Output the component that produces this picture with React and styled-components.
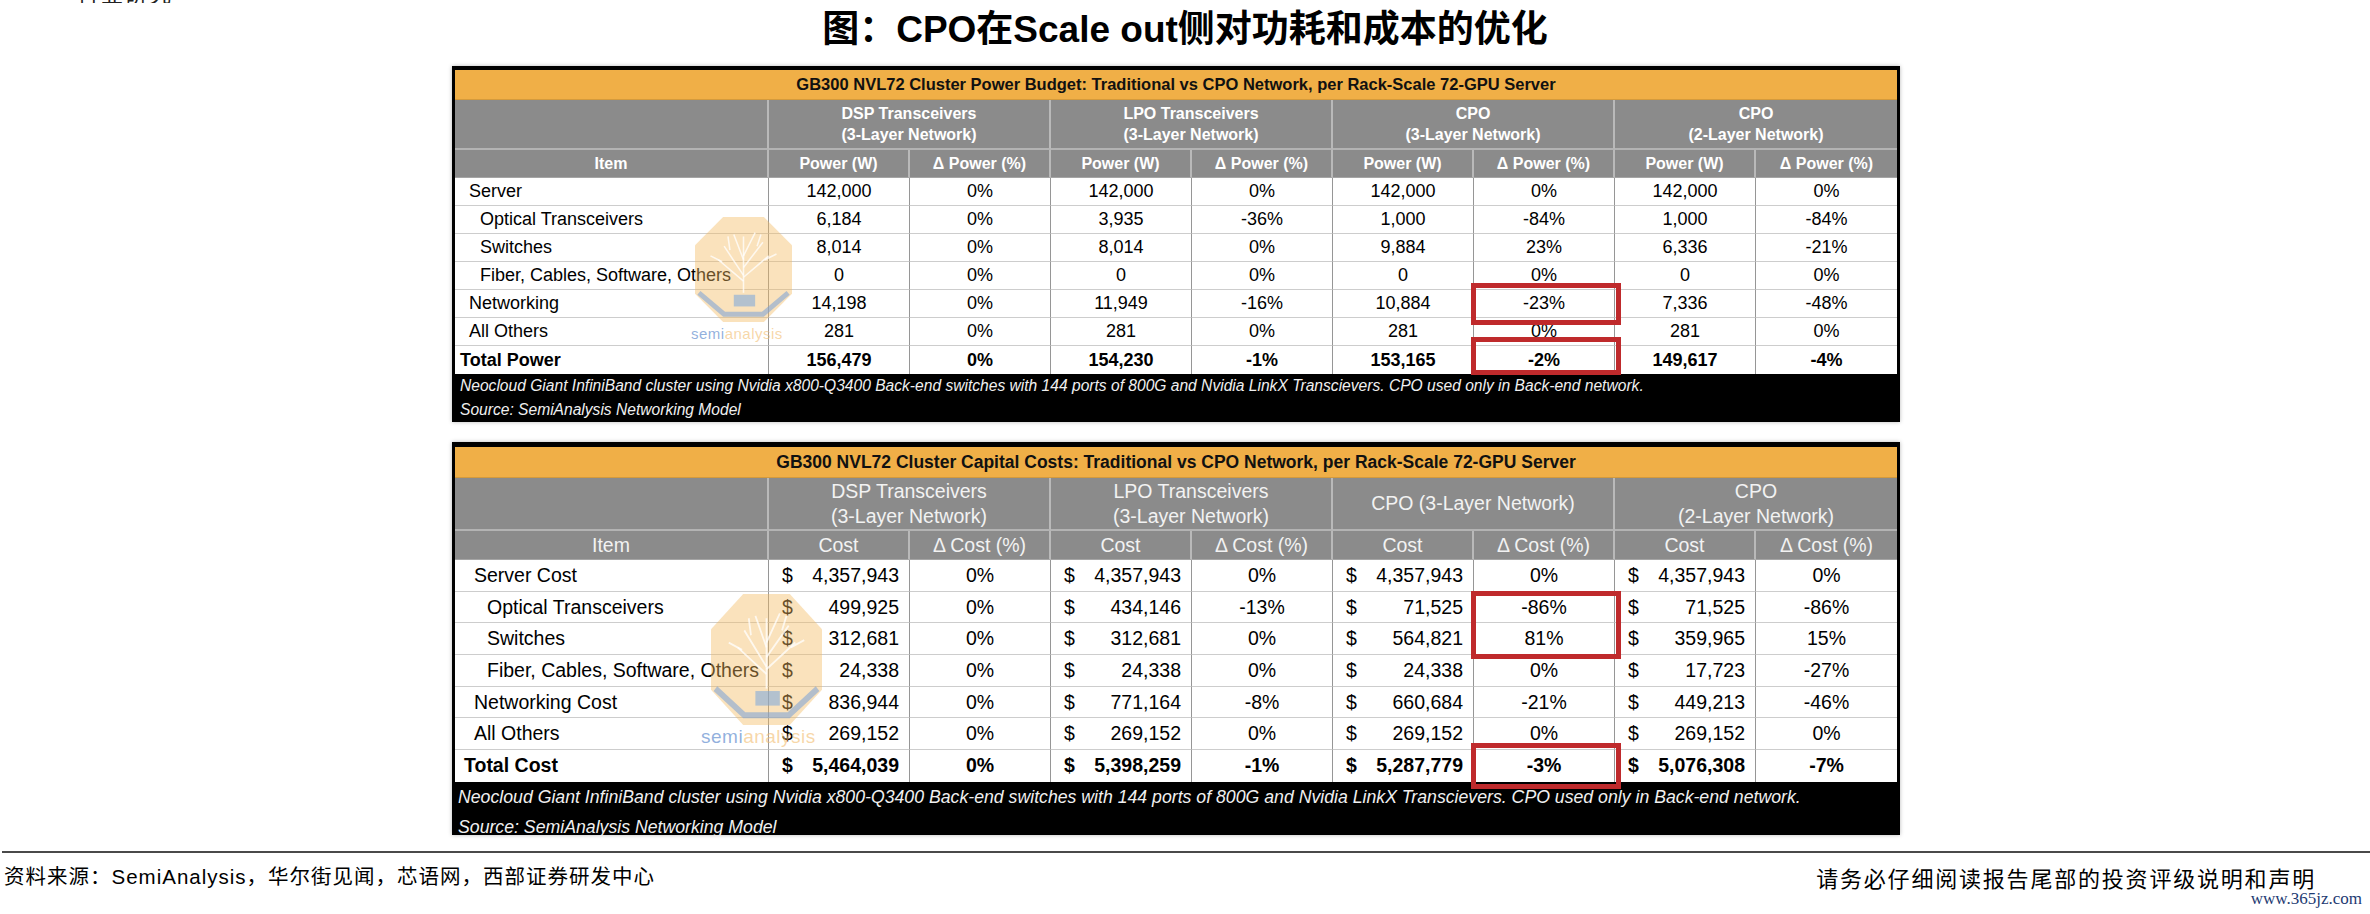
import React from 'react';
import styled, { createGlobalStyle } from 'styled-components';

const GlobalStyle = createGlobalStyle`
  html, body {
    margin: 0;
    padding: 0;
    background: #fff;
  }
  body {
    width: 2370px;
    height: 914px;
    overflow: hidden;
    font-family: "Liberation Sans", "Noto Sans CJK SC", Arial, sans-serif;
    color: #111;
  }
  * { box-sizing: border-box; }
`;

const power = {
  title: 'GB300 NVL72 Cluster Power Budget: Traditional vs CPO Network, per Rack-Scale 72-GPU Server',
  groups: [
    ['DSP Transceivers', '(3-Layer Network)'],
    ['LPO Transceivers', '(3-Layer Network)'],
    ['CPO', '(3-Layer Network)'],
    ['CPO', '(2-Layer Network)'],
  ],
  sub: ['Power (W)', 'Δ Power (%)'],
  rows: [
    { label: 'Server', level: 0, values: ['142,000', '0%', '142,000', '0%', '142,000', '0%', '142,000', '0%'] },
    { label: 'Optical Transceivers', level: 1, values: ['6,184', '0%', '3,935', '-36%', '1,000', '-84%', '1,000', '-84%'] },
    { label: 'Switches', level: 1, values: ['8,014', '0%', '8,014', '0%', '9,884', '23%', '6,336', '-21%'] },
    { label: 'Fiber, Cables, Software, Others', level: 1, values: ['0', '0%', '0', '0%', '0', '0%', '0', '0%'] },
    { label: 'Networking', level: 0, values: ['14,198', '0%', '11,949', '-16%', '10,884', '-23%', '7,336', '-48%'] },
    { label: 'All Others', level: 0, values: ['281', '0%', '281', '0%', '281', '0%', '281', '0%'] },
    { label: 'Total Power', level: 2, values: ['156,479', '0%', '154,230', '-1%', '153,165', '-2%', '149,617', '-4%'] },
  ],
  marks: [{ top: 213, h: 42 }, { top: 267, h: 38 }],
  logo: { left: 240, top: 147, w: 97, h: 105, textTop: 255, textLeft: 236, size: 15 },
};

const cost = {
  title: 'GB300 NVL72 Cluster Capital Costs: Traditional vs CPO Network, per Rack-Scale 72-GPU Server',
  groups: [
    ['DSP Transceivers', '(3-Layer Network)'],
    ['LPO Transceivers', '(3-Layer Network)'],
    ['CPO (3-Layer Network)'],
    ['CPO', '(2-Layer Network)'],
  ],
  sub: ['Cost', 'Δ Cost (%)'],
  rows: [
    { label: 'Server Cost', level: 0, values: ['4,357,943', '0%', '4,357,943', '0%', '4,357,943', '0%', '4,357,943', '0%'] },
    { label: 'Optical Transceivers', level: 1, values: ['499,925', '0%', '434,146', '-13%', '71,525', '-86%', '71,525', '-86%'] },
    { label: 'Switches', level: 1, values: ['312,681', '0%', '312,681', '0%', '564,821', '81%', '359,965', '15%'] },
    { label: 'Fiber, Cables, Software, Others', level: 1, values: ['24,338', '0%', '24,338', '0%', '24,338', '0%', '17,723', '-27%'] },
    { label: 'Networking Cost', level: 0, values: ['836,944', '0%', '771,164', '-8%', '660,684', '-21%', '449,213', '-46%'] },
    { label: 'All Others', level: 0, values: ['269,152', '0%', '269,152', '0%', '269,152', '0%', '269,152', '0%'] },
    { label: 'Total Cost', level: 2, values: ['5,464,039', '0%', '5,398,259', '-1%', '5,287,779', '-3%', '5,076,308', '-7%'] },
  ],
  marks: [{ top: 144, h: 68 }, { top: 296, h: 46 }],
  logo: { left: 256, top: 147, w: 111, h: 131, textTop: 279, textLeft: 246, size: 19 },
};

const note = [
  'Neocloud Giant InfiniBand cluster using Nvidia x800-Q3400 Back-end switches with 144 ports of 800G and Nvidia LinkX Transcievers. CPO used only in Back-end network.',
  'Source: SemiAnalysis Networking Model',
];

const Page = styled.div`
  width: 2370px;
  height: 914px;
  display: flex;
  flex-direction: column;
  overflow: hidden;
`;

const TopCut = styled.div`
  height: 3px;
  overflow: hidden;
  padding-left: 77px;
  span {
    display: block;
    margin-top: -19px;
    font: 22px/22px "Noto Sans CJK SC", sans-serif;
    letter-spacing: 2px;
    color: #222;
  }
`;

const Heading = styled.h1`
  margin: 0;
  height: 63px;
  padding-top: 5px;
  text-align: center;
  font: bold 37px/44px "Liberation Sans", "Noto Sans CJK SC", sans-serif;
  color: #000;
`;

const Tables = styled.div`
  display: flex;
  flex-direction: column;
  gap: 20px;
  padding-left: 452px;
`;

const Frame = styled.div`
  position: relative;
  width: 1448px;
  border-left: 3px solid #000;
  border-right: 3px solid #000;
  border-top: ${p => (p.$big ? 5 : 4)}px solid #000;
  box-shadow: 0 0 4px rgba(0, 0, 0, 0.28);
  font-family: "Liberation Sans", Arial, sans-serif;
`;

const Grid = styled.div`
  display: grid;
  grid-template-columns: 314px repeat(8, 141px);
  grid-template-rows: ${p =>
    p.$big ? '31px 53px 29px repeat(7, 31.7px)' : '30px 50px 28px repeat(7, 28px)'};
  font-size: ${p => (p.$big ? 19.5 : 18)}px;
`;

const Banner = styled.div`
  grid-column: 1 / -1;
  background: #f0af47;
  color: #111;
  display: flex;
  align-items: center;
  justify-content: center;
  font-weight: bold;
  font-size: ${p => (p.$big ? 17.5 : 16.5)}px;
  border-bottom: 1px solid #d49a3c;
`;

const HeadCell = styled.div`
  grid-column: span ${p => p.$span || 1};
  background: #8b8b8b;
  color: ${p => (p.$big ? '#f2f2f2' : '#fff')};
  font-weight: ${p => (p.$big ? 'normal' : 'bold')};
  font-size: ${p => (p.$big ? 19.5 : 16)}px;
  line-height: ${p => (p.$big ? 25 : 21)}px;
  display: flex;
  flex-direction: column;
  align-items: center;
  justify-content: center;
  text-align: center;
  border-right: ${p => (p.$last ? 'none' : '2px solid #b9b9b9')};
  border-bottom: ${p => (p.$top ? '2px solid #b3b3b3' : '1px solid #a5a5a5')};
`;

const Cell = styled.div`
  background: #fff;
  color: #000;
  display: flex;
  align-items: center;
  justify-content: ${p => (p.$money ? 'space-between' : 'center')};
  padding: ${p => (p.$money ? '0 10px 0 13px' : '0')};
  font-weight: ${p => (p.$bold ? 'bold' : 'normal')};
  border-right: ${p => (p.$last ? 'none' : '1px solid #969696')};
  border-bottom: ${p => (p.$end ? 'none' : '1px solid #cdcdcd')};
  white-space: nowrap;
`;

const LabelCell = styled(Cell)`
  justify-content: flex-start;
  padding-left: ${p => p.$indent}px;
`;

const Note = styled.div`
  background: #000;
  color: #f0f0f0;
  font-style: italic;
  margin: 0 -3px;
  padding: 0 ${p => (p.$big ? 6 : 8)}px;
  height: ${p => (p.$big ? 53 : 48)}px;
  font-size: ${p => (p.$big ? 17.7 : 15.6)}px;
  line-height: ${p => (p.$big ? 30 : 24)}px;
  white-space: nowrap;
`;

const Mark = styled.div`
  position: absolute;
  left: 1016px;
  width: 150px;
  top: ${p => p.$top}px;
  height: ${p => p.$h}px;
  border: 5px solid #bf2a2c;
  pointer-events: none;
`;

const Logo = styled.svg`
  position: absolute;
  left: ${p => p.$left}px;
  top: ${p => p.$top}px;
  pointer-events: none;
`;

const LogoText = styled.div`
  position: absolute;
  left: ${p => p.$left}px;
  top: ${p => p.$top}px;
  font-family: "Liberation Sans", Arial, sans-serif;
  font-size: ${p => p.$size}px;
  letter-spacing: 0.5px;
  pointer-events: none;
  span:first-child { color: rgba(110, 150, 210, 0.75); }
  span:last-child { color: rgba(242, 188, 110, 0.6); }
`;

const Rule = styled.div`
  margin: 16px 0 0 2px;
  height: 2px;
  background: #4a4a4a;
`;

const SourceRow = styled.div`
  margin-top: 11px;
  display: flex;
  justify-content: space-between;
  padding: 0 54px 0 4px;
  line-height: 26px;
  color: #000;
`;

const SourceText = styled.span`
  font-family: "Liberation Sans", "Noto Sans CJK SC", sans-serif;
  font-size: 20.5px;
  letter-spacing: 1px;
`;

const Disclaimer = styled.span`
  font-family: "Noto Sans CJK SC", sans-serif;
  font-size: 22px;
  letter-spacing: 1.8px;
`;

const Site = styled.div`
  text-align: right;
  padding-right: 8px;
  line-height: 18px;
  font-family: "Liberation Serif", serif;
  font-size: 17px;
  color: #1d3a72;
`;

function Watermark({ logo }) {
  return (
    <>
      <Logo $left={logo.left} $top={logo.top} width={logo.w} height={logo.h} viewBox="0 0 100 108" preserveAspectRatio="none">
        <polygon points="29,0 71,0 100,29 100,79 71,108 29,108 0,79 0,29" fill="rgba(244,186,96,0.42)" />
        <g stroke="rgba(255,255,255,0.75)" strokeWidth="1.6" fill="none">
          <path d="M50 78 L50 20" />
          <path d="M50 60 L30 30 M50 52 L70 26 M50 66 L24 44 M50 62 L76 40 M50 44 L40 18 M50 40 L62 16" />
          <path d="M36 34 L34 20 M64 30 L68 18 M28 46 L16 40 M72 44 L84 38" />
        </g>
        <polyline points="4,78 30,100 70,100 96,78" fill="none" stroke="rgba(120,160,215,0.55)" strokeWidth="5" />
        <rect x="40" y="80" width="22" height="12" fill="rgba(120,165,220,0.55)" />
      </Logo>
      <LogoText $left={logo.textLeft} $top={logo.textTop} $size={logo.size}>
        <span>semi</span>
        <span>analysis</span>
      </LogoText>
    </>
  );
}

function DataTable({ data, big }) {
  const indent = big ? [19, 32, 9] : [14, 25, 5];
  return (
    <Frame $big={big}>
      <Grid $big={big}>
        <Banner $big={big}>{data.title}</Banner>
        <HeadCell $big={big} $top />
        {data.groups.map((g, i) => (
          <HeadCell key={i} $big={big} $top $span={2} $last={i === 3}>
            {g.map(line => (
              <span key={line}>{line}</span>
            ))}
          </HeadCell>
        ))}
        <HeadCell $big={big}>Item</HeadCell>
        {Array.from({ length: 8 }, (_, i) => (
          <HeadCell key={i} $big={big} $last={i === 7}>
            {data.sub[i % 2]}
          </HeadCell>
        ))}
        {data.rows.map((row, r) => {
          const end = r === data.rows.length - 1;
          const bold = row.level === 2;
          return (
            <React.Fragment key={row.label}>
              <LabelCell $indent={indent[row.level]} $bold={bold} $end={end}>
                {row.label}
              </LabelCell>
              {row.values.map((v, c) =>
                big && c % 2 === 0 ? (
                  <Cell key={c} $money $bold={bold} $end={end}>
                    <span>$</span>
                    <span>{v}</span>
                  </Cell>
                ) : (
                  <Cell key={c} $bold={bold} $end={end} $last={c === 7}>
                    {v}
                  </Cell>
                )
              )}
            </React.Fragment>
          );
        })}
      </Grid>
      <Note $big={big}>
        {note.map(line => (
          <div key={line}>{line}</div>
        ))}
      </Note>
      {data.marks.map((m, i) => (
        <Mark key={i} $top={m.top} $h={m.h} />
      ))}
      <Watermark logo={data.logo} />
    </Frame>
  );
}

export default function App() {
  return (
    <Page>
      <GlobalStyle />
      <TopCut>
        <span>行业研究</span>
      </TopCut>
      <Heading>图：CPO在Scale out侧对功耗和成本的优化</Heading>
      <Tables>
        <DataTable data={power} />
        <DataTable data={cost} big />
      </Tables>
      <Rule />
      <SourceRow>
        <SourceText>资料来源：SemiAnalysis，华尔街见闻，芯语网，西部证券研发中心</SourceText>
        <Disclaimer>请务必仔细阅读报告尾部的投资评级说明和声明</Disclaimer>
      </SourceRow>
      <Site>www.365jz.com</Site>
    </Page>
  );
}
